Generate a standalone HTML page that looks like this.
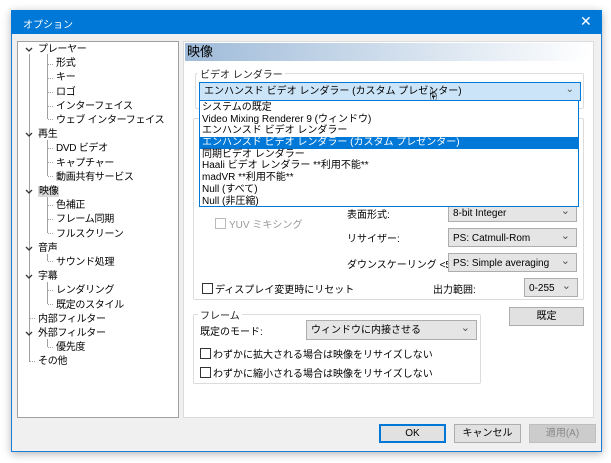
<!DOCTYPE html><html><head><meta charset="utf-8"><style>
*{box-sizing:border-box;margin:0;padding:0}
body{width:611px;height:463px;background:#fff;font-family:"Liberation Sans","Noto Sans CJK JP",sans-serif;font-size:10px;color:#000;position:relative;overflow:hidden}
.a{position:absolute;white-space:nowrap}
.win{left:11px;top:10px;width:591px;height:442px;background:#f0f0f0;border:1px solid #1a7fd4;box-shadow:0 2px 8px rgba(0,0,0,.3)}
.title{left:11px;top:10px;width:591px;height:24px;background:#0078d7;color:#fff}
.tree{left:17px;top:41px;width:162px;height:377px;background:#fff;border:1px solid #a0a0a0}
.panel{left:183px;top:41px;width:411px;height:377px;background:#fff;border:1px solid #dcdcdc}
.grp{border:1px solid #dcdcdc;border-radius:2px}
.lbl{background:#fff;padding:0 2px;color:#222}
.cb{background:#e5e5e5;border:1px solid #adadad;padding-left:4px;line-height:19px}
.cb:after{content:"⌄";position:absolute;right:6px;top:-2px;color:#555;font-size:11px}
.chk{width:11px;height:11px;border:1px solid #333;background:#fff}
.btn{background:#e1e1e1;border:1px solid #adadad;text-align:center;line-height:17px}
.t{font-size:10px}
.dl div{padding-left:2px;height:11.7px;line-height:12px}
</style></head><body>
<div class="a win"></div>
<div class="a title"><span class="a" style="left:12px;top:6px">オプション</span><span class="a" style="left:569px;top:3px;font-size:14px">✕</span></div>
<div class="a tree">
<svg class="a" style="left:0;top:0" width="160" height="340">
<g stroke="#a0a0a0" stroke-width="1" fill="none" shape-rendering="crispEdges">
<line x1="11.5" y1="12" x2="11.5" y2="320"/><line x1="29.5" y1="12" x2="29.5" y2="77"/><line x1="29.5" y1="98" x2="29.5" y2="134"/><line x1="29.5" y1="155" x2="29.5" y2="191"/><line x1="29.5" y1="212" x2="29.5" y2="219"/><line x1="29.5" y1="240" x2="29.5" y2="262"/><line x1="29.5" y1="297" x2="29.5" y2="305"/>
</g>
<g stroke="#a0a0a0" stroke-dasharray="1 1">
<line x1="30" y1="22.5" x2="36" y2="22.5"/><line x1="30" y1="36.5" x2="36" y2="36.5"/><line x1="30" y1="50.5" x2="36" y2="50.5"/><line x1="30" y1="64.5" x2="36" y2="64.5"/><line x1="30" y1="77.5" x2="36" y2="77.5"/>
<line x1="30" y1="106.5" x2="36" y2="106.5"/><line x1="30" y1="120.5" x2="36" y2="120.5"/><line x1="30" y1="134.5" x2="36" y2="134.5"/>
<line x1="30" y1="163.5" x2="36" y2="163.5"/><line x1="30" y1="177.5" x2="36" y2="177.5"/><line x1="30" y1="191.5" x2="36" y2="191.5"/>
<line x1="30" y1="219.5" x2="36" y2="219.5"/><line x1="30" y1="248.5" x2="36" y2="248.5"/><line x1="30" y1="262.5" x2="36" y2="262.5"/>
<line x1="12" y1="276.5" x2="18" y2="276.5"/><line x1="30" y1="305.5" x2="36" y2="305.5"/><line x1="12" y1="319.5" x2="18" y2="319.5"/>
</g>
<g stroke="#333" stroke-width="1.3" fill="none"><path d="M8 6l3 3 3-3M8 91l3 3 3-3M8 148l3 3 3-3M8 205l3 3 3-3M8 233l3 3 3-3M8 290l3 3 3-3"/></g>
</svg>
<div class="a" style="left:20px;top:1px;line-height:14.2px;letter-spacing:-0.3px">
<div>プレーヤー</div><div style="padding-left:18px">形式</div><div style="padding-left:18px">キー</div><div style="padding-left:18px">ロゴ</div><div style="padding-left:18px">インターフェイス</div><div style="padding-left:18px">ウェブ インターフェイス</div>
<div>再生</div><div style="padding-left:18px">DVD ビデオ</div><div style="padding-left:18px">キャプチャー</div><div style="padding-left:18px">動画共有サービス</div>
<div><span style="background:#d9d9d9;padding:0 1px">映像</span></div><div style="padding-left:18px">色補正</div><div style="padding-left:18px">フレーム同期</div><div style="padding-left:18px">フルスクリーン</div>
<div>音声</div><div style="padding-left:18px">サウンド処理</div><div>字幕</div><div style="padding-left:18px">レンダリング</div><div style="padding-left:18px">既定のスタイル</div><div>内部フィルター</div><div>外部フィルター</div><div style="padding-left:18px">優先度</div><div>その他</div>
</div></div>
<div class="a panel"></div>
<div class="a" style="left:185px;top:43px;width:407px;height:18px;background:linear-gradient(90deg,#9fbbd9,#fff);font-size:13px;padding-left:2px;line-height:18px">映像</div>
<div class="a grp" style="left:195px;top:73px;width:389px;height:36px"></div>
<span class="a lbl t" style="left:198px;top:66px">ビデオ レンダラー</span>
<div class="a grp" style="left:193px;top:118px;width:391px;height:182px"></div>
<div class="a grp" style="left:193px;top:314px;width:288px;height:70px"></div>
<span class="a lbl t" style="left:198px;top:307px">フレーム</span>
<div class="a t" style="left:199px;top:82px;width:382px;height:19px;background:#cce4f7;border:1px solid #0078d7;padding-left:4px;line-height:18px">エンハンスド ビデオ レンダラー (カスタム プレゼンター)<span class="a" style="right:6px;top:-2px;color:#555">⌄</span></div>
<div class="a" style="left:426px;top:86px;font-size:14px">☝</div>
<span class="a t" style="left:347px;top:206px">表面形式:</span>
<div class="a cb t" style="left:448px;top:203px;width:129px;height:19px">8-bit Integer</div>
<span class="a t" style="left:347px;top:230px">リサイザー:</span>
<div class="a cb t" style="left:448px;top:228px;width:129px;height:19px">PS: Catmull-Rom</div>
<span class="a t" style="left:347px;top:256px">ダウンスケーリング &lt;50%:</span>
<div class="a cb t" style="left:448px;top:253px;width:129px;height:19px">PS: Simple averaging</div>
<div class="a chk" style="left:215px;top:218px;border-color:#bbb"></div><span class="a t" style="left:229px;top:216px;color:#999">YUV ミキシング</span>
<div class="a chk" style="left:202px;top:283px"></div><span class="a t" style="left:215px;top:281px">ディスプレイ変更時にリセット</span>
<span class="a t" style="left:433px;top:281px">出力範囲:</span>
<div class="a cb t" style="left:524px;top:278px;width:54px;height:19px">0-255</div>
<div class="a btn t" style="left:509px;top:307px;width:75px;height:19px">既定</div>
<span class="a t" style="left:200px;top:323px">既定のモード:</span>
<div class="a cb t" style="left:306px;top:320px;width:171px;height:20px">ウィンドウに内接させる</div>
<div class="a chk" style="left:200px;top:348px"></div><span class="a t" style="left:213px;top:346px">わずかに拡大される場合は映像をリサイズしない</span>
<div class="a chk" style="left:200px;top:367px"></div><span class="a t" style="left:213px;top:365px">わずかに縮小される場合は映像をリサイズしない</span>
<div class="a t dl" style="left:199px;top:100px;width:380px;height:107px;background:#fff;border:1px solid #0078d7;padding-top:1px;overflow:hidden">
<div>システムの既定</div><div>Video Mixing Renderer 9 (ウィンドウ)</div><div>エンハンスド ビデオ レンダラー</div><div style="background:#0078d7;color:#fff">エンハンスド ビデオ レンダラー (カスタム プレゼンター)</div><div>同期ビデオ レンダラー</div><div>Haali ビデオ レンダラー **利用不能**</div><div>madVR **利用不能**</div><div>Null (すべて)</div><div>Null (非圧縮)</div></div>
<div class="a btn t" style="left:379px;top:424px;width:67px;height:19px;border:2px solid #0078d7;line-height:15px">OK</div>
<div class="a btn t" style="left:454px;top:424px;width:67px;height:19px">キャンセル</div>
<div class="a btn t" style="left:529px;top:424px;width:67px;height:19px;background:#ccc;border-color:#bfbfbf;color:#888">適用(A)</div>
</body></html>
